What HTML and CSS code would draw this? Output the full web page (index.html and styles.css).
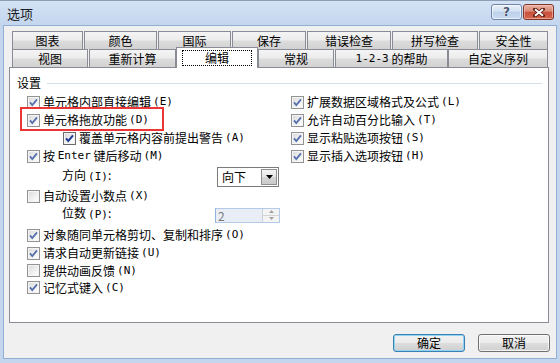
FILE: index.html
```html
<!DOCTYPE html>
<html lang="zh-CN">
<head>
<meta charset="utf-8">
<title>选项</title>
<link rel="stylesheet" href="styles.css">
</head>
<body>
<div class="window">
  <div class="titlebar">
    <span class="title">选项</span>
    <div class="caption">
      <div class="cbtn help"><span>?</span></div>
      <div class="cbtn close">
        <svg viewBox="0 0 12 9" width="12" height="9"><path d="M2 1.2 L10 7.8 M10 1.2 L2 7.8" stroke="#5a1c12" stroke-width="3.6" stroke-linecap="square"/><path d="M2 1.2 L10 7.8 M10 1.2 L2 7.8" stroke="#fff" stroke-width="2"/></svg>
      </div>
    </div>
  </div>
  <div class="client">
    <div class="tabs">
      <div class="tabrow">
        <div class="tab t71">图表</div>
        <div class="tab t73">颜色</div>
        <div class="tab t73">国际</div>
        <div class="tab t74">保存</div>
        <div class="tab t84">错误检查</div>
        <div class="tab t86">拼写检查</div>
        <div class="tab t69 last">安全性</div>
      </div>
      <div class="tabrow">
        <div class="tab t76">视图</div>
        <div class="tab t87 tight">重新计算</div>
        <div class="tab t82 sel tight"><span class="focus">编辑</span></div>
        <div class="tab t76">常规</div>
        <div class="tab t113 tight"><span class="k">1-2-3</span>&nbsp;的帮助</div>
        <div class="tab t100 last">自定义序列</div>
      </div>
    </div>
    <div class="panel">
      <div class="group-head"><span>设置</span><div class="rule"></div></div>
      <div class="cols">
        <div class="col left">
          <div class="row"><span class="cb on"><svg viewBox="0 0 11 11"><path d="M2 5.3 L4.3 8 L9 2.4"/></svg></span>单元格内部直接编辑<span class="k">(E)</span></div>
          <div class="row"><span class="cb on"><svg viewBox="0 0 11 11"><path d="M2 5.3 L4.3 8 L9 2.4"/></svg></span>单元格拖放功能<span class="k">(D)</span></div>
          <div class="row indent"><span class="cb on strong"><svg viewBox="0 0 11 11"><path d="M2 5.3 L4.3 8 L9 2.4"/></svg></span>覆盖单元格内容前提出警告<span class="k">(A)</span></div>
          <div class="row"><span class="cb on"><svg viewBox="0 0 11 11"><path d="M2 5.3 L4.3 8 L9 2.4"/></svg></span>按&nbsp;<span class="k en">Enter</span>&nbsp;键后移动<span class="k">(M)</span></div>
          <div class="row field dir">
            <span class="label w155">方向<span class="k">(I)</span>:</span>
            <div class="combo"><span class="val">向下</span><span class="drop"><svg viewBox="0 0 7 4" width="7" height="4"><path d="M0 0h7L3.5 4z" fill="#000"/></svg></span></div>
          </div>
          <div class="row"><span class="cb"></span>自动设置小数点<span class="k">(X)</span></div>
          <div class="row field">
            <span class="label w153">位数<span class="k">(P)</span>:</span>
            <div class="spin">
              <span class="sval">2</span>
              <span class="sbtns">
                <span class="sb"><svg viewBox="0 0 5 3" width="5" height="3"><path d="M0 3h5L2.5 0z" fill="#a3a3a3"/></svg></span>
                <span class="sb"><svg viewBox="0 0 5 3" width="5" height="3"><path d="M0 0h5L2.5 3z" fill="#a3a3a3"/></svg></span>
              </span>
            </div>
          </div>
          <div class="row gap3"><span class="cb on"><svg viewBox="0 0 11 11"><path d="M2 5.3 L4.3 8 L9 2.4"/></svg></span>对象随同单元格剪切、复制和排序<span class="k">(O)</span></div>
          <div class="row"><span class="cb on"><svg viewBox="0 0 11 11"><path d="M2 5.3 L4.3 8 L9 2.4"/></svg></span>请求自动更新链接<span class="k">(U)</span></div>
          <div class="row r17"><span class="cb"></span>提供动画反馈<span class="k">(N)</span></div>
          <div class="row r17"><span class="cb on"><svg viewBox="0 0 11 11"><path d="M2 5.3 L4.3 8 L9 2.4"/></svg></span>记忆式键入<span class="k">(C)</span></div>
        </div>
        <div class="col right">
          <div class="row"><span class="cb on"><svg viewBox="0 0 11 11"><path d="M2 5.3 L4.3 8 L9 2.4"/></svg></span>扩展数据区域格式及公式<span class="k">(L)</span></div>
          <div class="row"><span class="cb on"><svg viewBox="0 0 11 11"><path d="M2 5.3 L4.3 8 L9 2.4"/></svg></span>允许自动百分比输入<span class="k">(T)</span></div>
          <div class="row"><span class="cb on"><svg viewBox="0 0 11 11"><path d="M2 5.3 L4.3 8 L9 2.4"/></svg></span>显示粘贴选项按钮<span class="k">(S)</span></div>
          <div class="row"><span class="cb on"><svg viewBox="0 0 11 11"><path d="M2 5.3 L4.3 8 L9 2.4"/></svg></span>显示插入选项按钮<span class="k">(H)</span></div>
        </div>
      </div>
      <div class="highlight"></div>
    </div>
    <div class="actions">
      <div class="btn default">确定</div>
      <div class="btn">取消</div>
    </div>
  </div>
</div>
</body>
</html>
```

FILE: styles.css
```css
html, body {
  margin: 0;
  padding: 0;
  background: #c3d6ee;
}
body {
  font-family: "Noto Sans CJK SC", "Noto Sans", sans-serif;
  font-size: 12px;
  color: #000;
}
.window {
  width: 560px;
  height: 363px;
  box-sizing: border-box;
  background: linear-gradient(#d3e2f4, #c3d6ee 25px, #c3d6ee);
  display: flex;
  flex-direction: column;
  padding: 0 3px 4px 3px;
  border-top: 1px solid #8d9db4;
}
.titlebar {
  height: 24px;
  display: flex;
  align-items: flex-start;
  padding: 0 3px 0 4px;
}
.title {
  margin-top: 5px;
  font-size: 13px;
  line-height: 15px;
  color: #1c1c1c;
}
.caption {
  margin-left: auto;
  margin-top: 3px;
  display: flex;
  gap: 1px;
}
.cbtn {
  width: 31px;
  height: 16px;
  box-sizing: border-box;
  border-radius: 3px;
  display: flex;
  align-items: center;
  justify-content: center;
}
.help {
  border: 1px solid #6f86a8;
  background: linear-gradient(#e8f0fa, #d3e1f2 45%, #bcd0ea 50%, #c9dbf1);
  box-shadow: inset 0 0 0 1px rgba(255,255,255,0.6);
}
.help span {
  font-family: "DejaVu Sans", sans-serif;
  font-weight: bold;
  font-size: 12px;
  line-height: 12px;
  color: #44546f;
  text-shadow: 0 0 1px #fff, 0 0 1px #fff;
}
.close {
  border: 1px solid #7e3326;
  background: linear-gradient(#eab0a2, #d88a77 45%, #c9503a 50%, #d3654d);
  box-shadow: inset 0 0 0 1px rgba(255,220,210,0.5);
}
.client {
  flex: 1;
  border: 1px solid #8fb0d4;
  background: #f0f0f0;
  padding: 5px 6px 0 5px;
  display: flex;
  flex-direction: column;
}
.tabs {
  margin-left: 3px;
  width: 536px;
}
.tabrow {
  display: flex;
  height: 18px;
  align-items: flex-end;
}
.tab {
  height: 18px;
  box-sizing: border-box;
  border: 1px solid #898c95;
  border-bottom: none;
  margin-right: 1px;
  display: flex;
  align-items: center;
  justify-content: center;
  line-height: 14px;
  background: linear-gradient(#f4f4f4, #ececec 48%, #dcdcdc 52%, #d2d2d2);
  white-space: nowrap;
}
.tab.last, .tab.tight { margin-right: 0; }
.t69 { width: 69px; }
.t71 { width: 71px; }
.t73 { width: 73px; }
.t74 { width: 74px; }
.t76 { width: 76px; }
.t82 { width: 82px; }
.t84 { width: 84px; }
.t86 { width: 86px; }
.t87 { width: 87px; }
.t100 { width: 100px; }
.t113 { width: 113px; }
.tab.sel {
  height: 21px;
  margin-bottom: -1px;
  background: #fff;
  position: relative;
  z-index: 1;
  align-items: flex-start;
  padding: 2px 5px 0;
}
.focus {
  flex: 1;
  height: 16px;
  box-sizing: border-box;
  border: 1px dotted #000;
  text-align: center;
  line-height: 14px;
}
.k {
  font-family: "DejaVu Sans Mono", monospace;
  font-size: 11px;
  margin-left: 2px;
}
.tab .k, .k.en { margin-left: 0; }
.panel {
  width: 540px;
  height: 256px;
  box-sizing: border-box;
  border: 1px solid #898c95;
  background: #fff;
  position: relative;
}
.group-head {
  display: flex;
  align-items: center;
  margin-top: 8px;
  padding-left: 7px;
  padding-right: 6px;
  height: 14px;
  line-height: 14px;
}
.rule {
  flex: 1;
  height: 1px;
  background: #d5dfe5;
  margin-left: 6px;
}
.cols {
  display: flex;
  margin-top: 3px;
  padding-left: 17px;
}
.col.left { width: 264px; }
.row {
  display: flex;
  align-items: center;
  height: 18px;
  line-height: 14px;
  white-space: nowrap;
}
.row.r17 { height: 17px; }
.row.gap3 { margin-top: 3px; }
.row.indent { padding-left: 36px; }
.cb {
  width: 13px;
  height: 13px;
  box-sizing: border-box;
  border: 1px solid #939393;
  background: linear-gradient(135deg, #d9d9d9, #f6f6f6 70%, #fff);
  box-shadow: inset 0 0 0 1px #f4f4f4;
  margin-right: 3px;
  flex: none;
}
.cb svg {
  display: block;
  width: 11px;
  height: 11px;
}
.cb svg path {
  fill: none;
  stroke: #5670ad;
  stroke-width: 1.8;
}
.cb.strong {
  border-color: #6b6b6b;
  background: linear-gradient(135deg, #d4d4d4, #f8f8f8 70%, #fff);
}
.cb.strong svg path {
  stroke: #1d3c92;
  stroke-width: 2;
}
.row.field {
  padding-left: 35px;
}
.row.dir {
  height: 20px;
  margin-top: 2px;
  align-items: flex-start;
}
.row.dir .label { padding-top: 1px; }
.label { flex: none; }
.w155 { width: 155px; }
.w153 { width: 153px; }
.combo {
  width: 62px;
  height: 20px;
  box-sizing: border-box;
  border: 1px solid #7b7b7b;
  background: #fff;
  display: flex;
  align-items: center;
}
.combo .val {
  flex: 1;
  padding-left: 4px;
  line-height: 16px;
}
.drop {
  width: 16px;
  height: 16px;
  margin-right: 1px;
  box-sizing: border-box;
  border: 1px solid #8e8f8f;
  background: linear-gradient(#f4f4f4, #e6e6e6 48%, #d6d6d6 52%, #cacaca);
  display: flex;
  align-items: center;
  justify-content: center;
}
.spin {
  width: 65px;
  height: 15px;
  box-sizing: border-box;
  border: 1px solid #b3cbe8;
  border-left-color: #8fb2df;
  background: #e9eef6;
  display: flex;
  margin-top: 2px;
}
.sval {
  flex: 1;
  padding-left: 2px;
  line-height: 13px;
  color: #7a7a7a;
}
.sbtns {
  width: 16px;
  border-left: 1px solid #c9d1dc;
  display: flex;
  flex-direction: column;
  background: #f4f4f4;
}
.sb {
  flex: 1;
  display: flex;
  align-items: center;
  justify-content: center;
}
.sb + .sb { border-top: 1px solid #d4d4d4; }
.highlight {
  position: absolute;
  left: 10px;
  top: 39px;
  width: 144px;
  height: 24px;
  box-sizing: border-box;
  border: 2px solid #ec3535;
}
.actions {
  display: flex;
  justify-content: flex-end;
  gap: 13px;
  margin-top: 11px;
}
.btn {
  width: 72px;
  height: 18px;
  box-sizing: border-box;
  border: 1px solid #707070;
  border-radius: 3px;
  background: linear-gradient(#f2f2f2, #ebebeb 48%, #dddddd 52%, #cfcfcf);
  box-shadow: inset 0 0 0 1px rgba(255,255,255,0.7);
  display: flex;
  align-items: center;
  justify-content: center;
  line-height: 14px;
}
.btn.default {
  border-color: #3c7fb1;
  box-shadow: inset 0 0 0 1px #8fd3f5;
}
```
